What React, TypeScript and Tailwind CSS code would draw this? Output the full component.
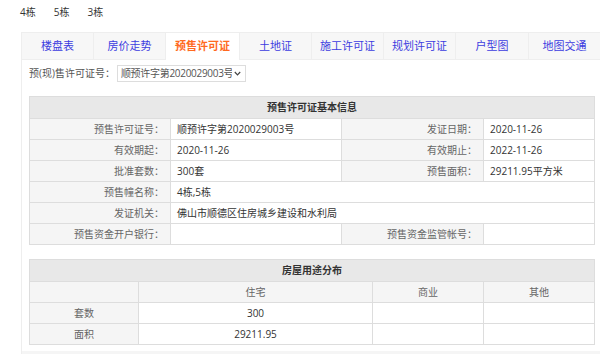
const tabs = [
  { name: "楼盘表", w: "w-[72px]" },
  { name: "房价走势", w: "w-[72px]" },
  { name: "预售许可证", w: "w-[74px]", active: true },
  { name: "土地证", w: "w-[72px]" },
  { name: "施工许可证", w: "w-[72px]" },
  { name: "规划许可证", w: "w-[72px]" },
  { name: "户型图", w: "w-[73px]" },
  { name: "地图交通", w: "w-[72px]" },
];

const lab = "bg-[#f5f5f5] text-[#666] text-right pr-[6px] border border-[#ddd]";
const val = "text-[#333] text-left pl-[6px] border border-[#ddd]";

export default function App() {
  return (
    <div className="w-[600px] h-[354px] overflow-hidden bg-white font-['Open_Sans','Noto_Sans_CJK_SC',sans-serif] text-[10px]">
      {/* 楼栋 */}
      <div className="h-[32px] pt-[4px] pl-[20px] flex gap-[18px] leading-[16px] text-[#333]">
        <span>4栋</span>
        <span>5栋</span>
        <span>3栋</span>
      </div>

      <div className="ml-[21px] w-[580px] border-l border-[#eee]">
        {/* tabs */}
        <div className="flex h-[28px] border-t border-[#eee]">
          {tabs.map((t) => (
            <div
              key={t.name}
              className={`${t.w} shrink-0 flex items-center justify-center text-[11px] border-r border-[#eee] ${
                t.active ? "bg-white text-[#ff6a1f] font-bold" : "bg-[#f7f7f7] text-[#3d3de0] border-b"
              }`}
            >
              {t.name}
            </div>
          ))}
        </div>

        <div className="px-[7px]">
          {/* select */}
          <div className="flex items-center h-[36px] pb-[10px] pt-[1px]">
            <span className="text-[#555] mr-[2px] whitespace-nowrap">预(现)售许可证号：</span>
            <div className="w-[129px] h-[17px] border border-[#ddd] flex items-center justify-between pl-[3px] pr-[4px] text-[#555]">
              <span className="whitespace-nowrap overflow-hidden tracking-[-0.3px]">顺预许字第2020029003号</span>
              <svg width="7" height="5" viewBox="0 0 7 5" className="shrink-0 ml-[2px]">
                <path d="M0.8 1 L3.5 3.8 L6.2 1" fill="none" stroke="#444" strokeWidth="1.2" />
              </svg>
            </div>
          </div>

          {/* 基本信息 */}
          <table className="w-[565px] table-fixed border-collapse">
            <colgroup>
              <col className="w-[141px]" />
              <col className="w-[171px]" />
              <col className="w-[142px]" />
              <col className="w-[111px]" />
            </colgroup>
            <tbody>
              <tr className="h-[22px]">
                <td colSpan={4} className="bg-[#e8e8e8] text-center font-bold text-[#333] border border-[#ddd]">
                  预售许可证基本信息
                </td>
              </tr>
              <tr className="h-[21px]">
                <td className={lab}>预售许可证号：</td>
                <td className={val}>顺预许字第2020029003号</td>
                <td className={lab}>发证日期：</td>
                <td className={val}>2020-11-26</td>
              </tr>
              <tr className="h-[21px]">
                <td className={lab}>有效期起：</td>
                <td className={val}>2020-11-26</td>
                <td className={lab}>有效期止：</td>
                <td className={val}>2022-11-26</td>
              </tr>
              <tr className="h-[21px]">
                <td className={lab}>批准套数：</td>
                <td className={val}>300套</td>
                <td className={lab}>预售面积：</td>
                <td className={val}>29211.95平方米</td>
              </tr>
              <tr className="h-[21px]">
                <td className={lab}>预售幢名称：</td>
                <td colSpan={3} className={val}>4栋,5栋</td>
              </tr>
              <tr className="h-[21px]">
                <td className={lab}>发证机关：</td>
                <td colSpan={3} className={val}>佛山市顺德区住房城乡建设和水利局</td>
              </tr>
              <tr className="h-[21px]">
                <td className={lab}>预售资金开户银行：</td>
                <td className={val}></td>
                <td className={lab}>预售资金监管帐号：</td>
                <td className={val}></td>
              </tr>
            </tbody>
          </table>

          {/* 用途分布 */}
          <table className="w-[565px] table-fixed border-collapse mt-[14px]">
            <colgroup>
              <col className="w-[109px]" />
              <col className="w-[234px]" />
              <col className="w-[111px]" />
              <col className="w-[111px]" />
            </colgroup>
            <tbody>
              <tr className="h-[22px]">
                <td colSpan={4} className="bg-[#e8e8e8] text-center font-bold text-[#333] border border-[#ddd]">
                  房屋用途分布
                </td>
              </tr>
              <tr className="h-[21px] text-center text-[#666]">
                <td className="bg-[#f5f5f5] border border-[#ddd]"></td>
                <td className="bg-[#f5f5f5] border border-[#ddd]">住宅</td>
                <td className="bg-[#f5f5f5] border border-[#ddd]">商业</td>
                <td className="bg-[#f5f5f5] border border-[#ddd]">其他</td>
              </tr>
              <tr className="h-[21px] text-center">
                <td className="bg-[#f5f5f5] text-[#666] border border-[#ddd]">套数</td>
                <td className="text-[#333] border border-[#ddd]">300</td>
                <td className="border border-[#ddd]"></td>
                <td className="border border-[#ddd]"></td>
              </tr>
              <tr className="h-[21px] text-center">
                <td className="bg-[#f5f5f5] text-[#666] border border-[#ddd]">面积</td>
                <td className="text-[#333] border border-[#ddd]">29211.95</td>
                <td className="border border-[#ddd]"></td>
                <td className="border border-[#ddd]"></td>
              </tr>
            </tbody>
          </table>
          <div className="h-[6px]" />
        </div>
        <div className="h-[10px] bg-[#f5f5f5]" />
      </div>
    </div>
  );
}
